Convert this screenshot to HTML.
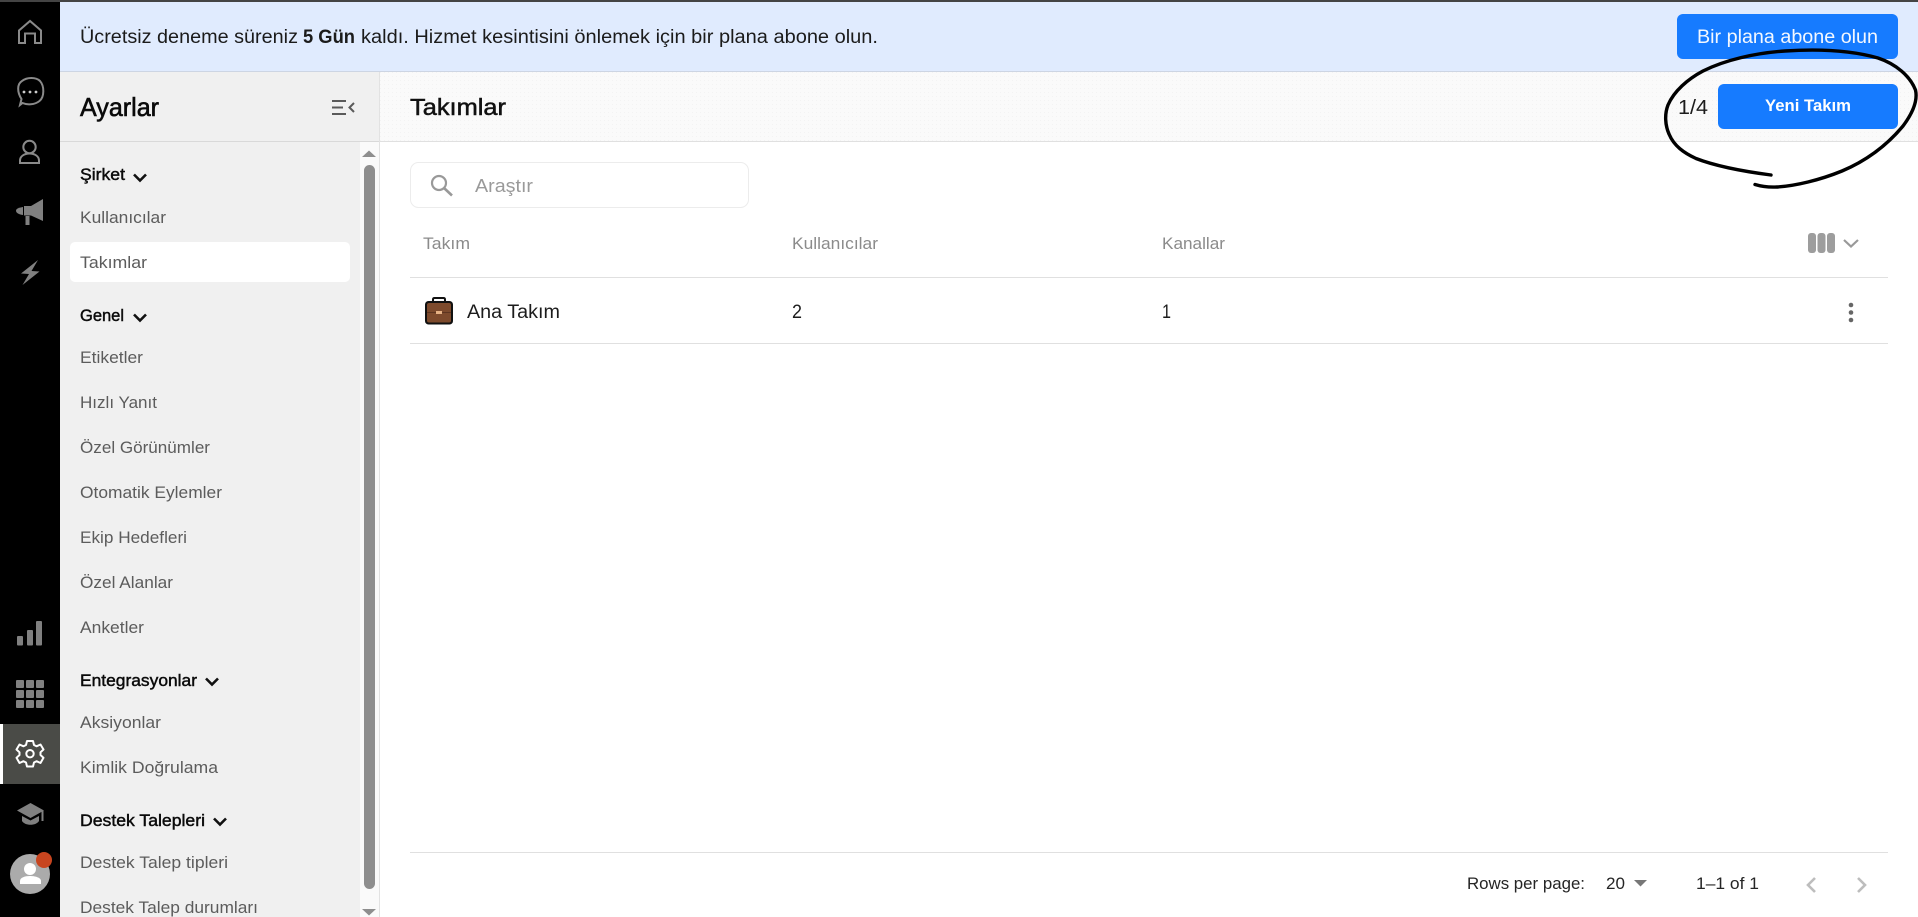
<!DOCTYPE html>
<html lang="tr">
<head>
<meta charset="utf-8">
<title>Takımlar</title>
<style>
html,body{margin:0;padding:0;width:1918px;height:917px;overflow:hidden;background:#fff}
svg{display:block}
text{font-family:"Liberation Sans",Arial,sans-serif;white-space:pre}
.s{font-size:17px;fill:#5c5c5c}
.h{font-size:17px;fill:#0a0a0a;stroke:#0a0a0a;stroke-width:.45px}
.th{font-size:17px;fill:#8b8b8b}
.d{font-size:19px;fill:#1c1c1c}
.f{font-size:17px;fill:#252525}
.b{font-size:19px;fill:#1b1b1b}
</style>
</head>
<body>
<svg width="1918" height="917" viewBox="0 0 1918 917" xmlns="http://www.w3.org/2000/svg">
<defs>
<pattern id="dots" width="4" height="4" patternUnits="userSpaceOnUse"><rect width="4" height="4" fill="#fafafa"/><rect width="1" height="1" fill="#f3f3f3"/></pattern>
</defs>
<rect width="1918" height="917" fill="#fff"/>
<!-- top strip -->
<rect width="1918" height="2" fill="#444"/>
<!-- rail -->
<rect y="2" width="60" height="915" fill="#000"/>
<!-- banner -->
<rect x="60" y="2" width="1858" height="69" fill="#e0ebfe"/>
<rect x="60" y="71" width="1858" height="1" fill="#cdd5e3"/>
<text class="b" x="80" y="43" textLength="218" lengthAdjust="spacingAndGlyphs">Ücretsiz deneme süreniz</text>
<text class="b" x="303" y="43" textLength="52" lengthAdjust="spacingAndGlyphs" font-weight="700">5 Gün</text>
<text class="b" x="361" y="43" textLength="517" lengthAdjust="spacingAndGlyphs">kaldı. Hizmet kesintisini önlemek için bir plana abone olun.</text>
<rect x="1677" y="14" width="221" height="45" rx="6" fill="#167bff"/>
<text x="1697" y="43" font-size="19" fill="#f4f8ff" textLength="181" lengthAdjust="spacingAndGlyphs">Bir plana abone olun</text>
<!-- left panel -->
<rect x="60" y="72" width="319" height="845" fill="#f0f0f0"/>
<rect x="60" y="141" width="319" height="1" fill="#d9d9d9"/>
<text x="80" y="116" font-size="26" fill="#0a0a0a" stroke="#0a0a0a" stroke-width=".6" textLength="79" lengthAdjust="spacingAndGlyphs">Ayarlar</text>
<g fill="none" stroke="#5a5a5a" stroke-width="2">
<path d="M332 101H346M332 107.500H343M332 114H346"/>
<path d="M354 103L349.500 107.500L354 112"/>
</g>
<!-- active pill -->
<rect x="70" y="242" width="280" height="40" rx="5" fill="#fff"/>
<!-- sidebar text -->
<text class="h" x="80" y="180" textLength="45" lengthAdjust="spacingAndGlyphs">Şirket</text>
<text class="s" x="80" y="223" textLength="86" lengthAdjust="spacingAndGlyphs">Kullanıcılar</text>
<text class="s" x="80" y="268" textLength="67" lengthAdjust="spacingAndGlyphs">Takımlar</text>
<text class="h" x="80" y="321" textLength="44" lengthAdjust="spacingAndGlyphs">Genel</text>
<text class="s" x="80" y="363" textLength="63" lengthAdjust="spacingAndGlyphs">Etiketler</text>
<text class="s" x="80" y="408" textLength="77" lengthAdjust="spacingAndGlyphs">Hızlı Yanıt</text>
<text class="s" x="80" y="453" textLength="130" lengthAdjust="spacingAndGlyphs">Özel Görünümler</text>
<text class="s" x="80" y="498" textLength="142" lengthAdjust="spacingAndGlyphs">Otomatik Eylemler</text>
<text class="s" x="80" y="543" textLength="107" lengthAdjust="spacingAndGlyphs">Ekip Hedefleri</text>
<text class="s" x="80" y="588" textLength="93" lengthAdjust="spacingAndGlyphs">Özel Alanlar</text>
<text class="s" x="80" y="633" textLength="64" lengthAdjust="spacingAndGlyphs">Anketler</text>
<text class="h" x="80" y="686" textLength="117" lengthAdjust="spacingAndGlyphs">Entegrasyonlar</text>
<text class="s" x="80" y="728" textLength="81" lengthAdjust="spacingAndGlyphs">Aksiyonlar</text>
<text class="s" x="80" y="773" textLength="138" lengthAdjust="spacingAndGlyphs">Kimlik Doğrulama</text>
<text class="h" x="80" y="826" textLength="125" lengthAdjust="spacingAndGlyphs">Destek Talepleri</text>
<text class="s" x="80" y="868" textLength="148" lengthAdjust="spacingAndGlyphs">Destek Talep tipleri</text>
<text class="s" x="80" y="913" textLength="178" lengthAdjust="spacingAndGlyphs">Destek Talep durumları</text>
<g fill="none" stroke="#111" stroke-width="2.600">
<path d="M134 174.500L140 180.500L146 174.500"/>
<path d="M134 314.500L140 320.500L146 314.500"/>
<path d="M206 678.500L212 684.500L218 678.500"/>
<path d="M214 818.500L220 824.500L226 818.500"/>
</g>
<!-- scrollbar -->
<rect x="360" y="142" width="19" height="775" fill="#fafafa"/>
<rect x="379" y="72" width="1" height="845" fill="#e2e2e2"/>
<path d="M362 157L369 150.500L376 157Z" fill="#8e8e8e"/>
<rect x="364" y="165" width="11" height="724" rx="5.500" fill="#8e8e8e"/>
<path d="M362 909L369 915.500L376 909Z" fill="#8e8e8e"/>
<!-- main header -->
<rect x="380" y="72" width="1538" height="69" fill="url(#dots)"/>
<rect x="380" y="141" width="1538" height="1" fill="#e0e0e0"/>
<text x="410" y="115" font-size="23" fill="#111" stroke="#111" stroke-width=".5" textLength="96" lengthAdjust="spacingAndGlyphs">Takımlar</text>
<text x="1678" y="114" font-size="20" fill="#1c1c1c" textLength="30" lengthAdjust="spacingAndGlyphs">1/4</text>
<rect x="1718" y="84" width="180" height="45" rx="6" fill="#167bff"/>
<text x="1765" y="111" font-size="17" font-weight="700" fill="#fff" textLength="86" lengthAdjust="spacingAndGlyphs">Yeni Takım</text>
<!-- search -->
<rect x="410.500" y="162.500" width="338" height="45" rx="8" fill="#fff" stroke="#ececec"/>
<circle cx="439" cy="183" r="7" fill="none" stroke="#999" stroke-width="2.200"/>
<path d="M444 188L452 195.500" stroke="#999" stroke-width="2.600" fill="none"/>
<text x="475" y="192" font-size="18" fill="#9a9a9a" textLength="58" lengthAdjust="spacingAndGlyphs">Araştır</text>
<!-- table header -->
<text class="th" x="423" y="249" textLength="47" lengthAdjust="spacingAndGlyphs">Takım</text>
<text class="th" x="792" y="249" textLength="86" lengthAdjust="spacingAndGlyphs">Kullanıcılar</text>
<text class="th" x="1162" y="249" textLength="63" lengthAdjust="spacingAndGlyphs">Kanallar</text>
<g fill="#9d9d9d">
<rect x="1808" y="233" width="8" height="20" rx="3"/>
<rect x="1817.500" y="233" width="8" height="20" rx="3"/>
<rect x="1827" y="233" width="8" height="20" rx="3"/>
</g>
<path d="M1844 240L1851 246.500L1858 240" fill="none" stroke="#999" stroke-width="2.200"/>
<rect x="410" y="277" width="1478" height="1" fill="#e0e0e0"/>
<!-- row -->
<g>
<path d="M433 302V299.500Q433 298 434.500 298H443.500Q445 298 445 299.500V302" fill="none" stroke="#111" stroke-width="2"/>
<rect x="425" y="301" width="28" height="23.500" rx="3.500" fill="#111"/>
<rect x="427" y="303" width="24" height="19.500" rx="2" fill="#7d4a2c"/>
<rect x="427" y="312" width="24" height="1" fill="#5e3520"/>
<rect x="436" y="311" width="6" height="3" fill="#e5b184"/>
</g>
<text class="d" x="467" y="318" textLength="93" lengthAdjust="spacingAndGlyphs">Ana Takım</text>
<text class="d" x="792" y="318" textLength="10" lengthAdjust="spacingAndGlyphs">2</text>
<text class="d" x="1162" y="318" textLength="9" lengthAdjust="spacingAndGlyphs">1</text>
<g fill="#666"><circle cx="1851" cy="305" r="2.300"/><circle cx="1851" cy="312.500" r="2.300"/><circle cx="1851" cy="320" r="2.300"/></g>
<rect x="410" y="343" width="1478" height="1" fill="#e0e0e0"/>
<!-- footer -->
<rect x="410" y="852" width="1478" height="1" fill="#e0e0e0"/>
<text class="f" x="1467" y="889" textLength="118" lengthAdjust="spacingAndGlyphs">Rows per page:</text>
<text class="f" x="1606" y="889" textLength="19" lengthAdjust="spacingAndGlyphs">20</text>
<path d="M1634 880H1647L1640.500 886.500Z" fill="#777"/>
<text class="f" x="1696" y="889" textLength="63" lengthAdjust="spacingAndGlyphs">1–1 of 1</text>
<g fill="none" stroke="#bdbdbd" stroke-width="2.600">
<path d="M1815 878L1808 885L1815 892"/>
<path d="M1858 878L1865 885L1858 892"/>
</g>
<!-- hand drawn ring -->
<path d="M1771 175C1748 172 1718 167 1696 158.500C1684 153 1674 146 1669 134C1665 125 1664.500 114 1668 105C1674 91 1688 79 1703 71C1725 60 1755 53 1785 51C1815 49 1850 50 1878 58C1896 64 1910 76 1915.500 90C1918 101 1912 114 1903 126C1888 144 1868 160 1842 171C1820 180 1795 186 1777 187C1768 187.500 1760 186 1755 184.500" fill="none" stroke="#000" stroke-width="3.400" stroke-linecap="round"/>
<!-- rail icons -->
<g fill="none" stroke="#8a8a8a" stroke-width="2">
<path d="M19 43V30.500L30 21L41 30.500V43H35V33.500H25V43Z"/>
<path d="M20 105L21.500 99C17 92 17 84 22 81C27 77 36 77 40 81C44.500 86 44.500 97 39.500 101C34.500 105 27 105 22.500 103Z"/>
<circle cx="29.500" cy="147" r="6.200"/>
<path d="M20 163V160.500C20 156.500 24 153.500 29.500 153.500C35 153.500 39 156.500 39 160.500V163Z"/>
</g>
<g fill="#ccc"><circle cx="24" cy="92" r="1.400"/><circle cx="30" cy="92" r="1.400"/><circle cx="36" cy="92" r="1.400"/></g>
<g fill="#808080">
<path d="M23 207Q16 208 16 210.500Q16 214 23 215Z"/>
<path d="M24 206H31L43 199V221L31 215.500H24Z"/>
<rect x="25.500" y="216" width="4" height="9"/>
<path d="M38 260L21 273.500L29 274L22.500 285L39.500 271.500L31.500 271Z"/>
<rect x="17" y="636" width="6" height="9.500" rx="1"/>
<rect x="27" y="630" width="6" height="15.500" rx="1"/>
<rect x="36" y="621" width="6" height="24.500" rx="1"/>
<rect x="16" y="680" width="8" height="8" rx="1"/><rect x="26" y="680" width="8" height="8" rx="1"/><rect x="36" y="680" width="8" height="8" rx="1"/>
<rect x="16" y="690" width="8" height="8" rx="1"/><rect x="26" y="690" width="8" height="8" rx="1"/><rect x="36" y="690" width="8" height="8" rx="1"/>
<rect x="16" y="700" width="8" height="8" rx="1"/><rect x="26" y="700" width="8" height="8" rx="1"/><rect x="36" y="700" width="8" height="8" rx="1"/>
<path d="M30.500 803L17 810.500L30.500 818L44 810.500Z"/>
<path d="M22 816V821C25 826 36 826 39 821V816L30.500 820.500Z"/>
<rect x="41.500" y="811" width="2" height="10"/>
</g>
<!-- settings active -->
<rect y="724" width="3" height="60" fill="#fff"/>
<rect x="3" y="724" width="57" height="60" fill="#4a4b47"/>
<g fill="none" stroke="#fff" stroke-width="2">
<path d="M27 741H33L34 745L36.500 746.300L40.500 744.500L43.500 749.500L40.500 752.300V755L43.500 757.800L40.500 763L36.500 761.200L34 762.500L33 766.500H27L26 762.500L23.500 761.200L19.500 763L16.500 757.800L19.500 755V752.300L16.500 749.500L19.500 744.500L23.500 746.300L26 745Z" stroke-linejoin="round"/>
<circle cx="30" cy="753.700" r="3.700"/>
</g>
<!-- avatar -->
<circle cx="30" cy="874" r="20" fill="#ababab"/>
<circle cx="30" cy="869" r="6" fill="#fff"/>
<path d="M20 884V881C20 877.500 25 876 30 876C35 876 41 877.500 41 881V884Z" fill="#fff"/>
<circle cx="44" cy="860" r="8" fill="#c8451f"/>
</svg>
</body>
</html>
